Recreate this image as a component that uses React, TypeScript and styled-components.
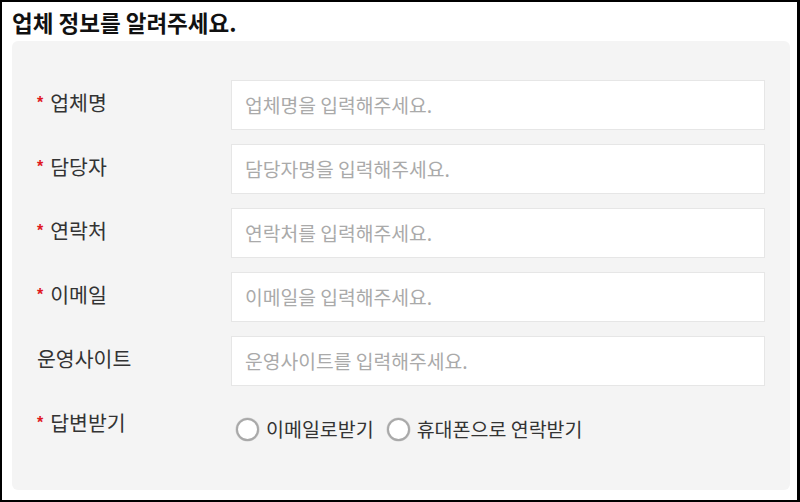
import React from "react";
import styled, { createGlobalStyle } from "styled-components";

const GlobalStyle = createGlobalStyle`
  html, body {
    margin: 0;
    padding: 0;
    background: #ffffff;
  }
  body {
    font-family: "Noto Sans CJK KR", "Noto Sans", sans-serif;
  }
  * { box-sizing: border-box; }
`;

const Frame = styled.div`
  width: 800px;
  height: 502px;
  border: 2px solid #000;
  border-right-width: 3px;
  padding: 6px 7px 0 10px;
  background: #fff;
`;

const Title = styled.h2`
  margin: 0 0 5px;
  font-size: 22.5px;
  line-height: 28px;
  font-weight: 700;
  color: #111;
`;

const Panel = styled.div`
  background: #f4f4f4;
  border-radius: 6px;
  padding: 39px 25px 40px 25px;
  display: grid;
  grid-template-columns: 194px 1fr;
  row-gap: 14px;
`;

const Label = styled.div`
  padding-top: 10px;
  font-size: 20.5px;
  line-height: 24px;
  color: #333;
  white-space: nowrap;
`;

const Star = styled.span`
  display: inline-block;
  font-family: "Liberation Sans", Arial, sans-serif;
  font-weight: 700;
  font-size: 16px;
  color: #e0191f;
  margin-right: 7px;
  vertical-align: 3px;
`;

const TextInput = styled.input`
  display: block;
  width: 100%;
  height: 50px;
  margin: 0;
  padding: 0 13px;
  background: #fff;
  border: 1px solid #e6e6e6;
  border-radius: 0;
  outline: none;
  font-family: "Noto Sans CJK KR", sans-serif;
  font-size: 19.3px;
  color: #333;
  &::placeholder {
    color: #aaaaaa;
  }
`;

const RadioGroup = styled.div`
  display: flex;
  align-items: center;
  height: 50px;
  padding-top: 8px;
  padding-left: 5px;
  gap: 13px;
`;

const RadioOption = styled.label`
  display: flex;
  align-items: center;
  gap: 7px;
  font-size: 19.5px;
  line-height: 24px;
  color: #333;
  cursor: pointer;
  white-space: nowrap;
`;

const RadioCircle = styled.input`
  appearance: none;
  -webkit-appearance: none;
  margin: 0;
  width: 23px;
  height: 23px;
  border-radius: 50%;
  border: 2px solid #a9a9a9;
  background: #fff;
  box-shadow: 0 0 0 0.5px #d0d0d0;
  flex: none;
`;

type Field = { label: string; placeholder: string; required: boolean };

const fields: Field[] = [
  { label: "업체명", placeholder: "업체명을 입력해주세요.", required: true },
  { label: "담당자", placeholder: "담당자명을 입력해주세요.", required: true },
  { label: "연락처", placeholder: "연락처를 입력해주세요.", required: true },
  { label: "이메일", placeholder: "이메일을 입력해주세요.", required: true },
  { label: "운영사이트", placeholder: "운영사이트를 입력해주세요.", required: false },
];

export default function App() {
  return (
    <>
      <GlobalStyle />
      <Frame>
        <Title>업체 정보를 알려주세요.</Title>
        <Panel>
          {fields.map((f) => (
            <React.Fragment key={f.label}>
              <Label>
                {f.required && <Star>*</Star>}
                {f.label}
              </Label>
              <TextInput type="text" placeholder={f.placeholder} />
            </React.Fragment>
          ))}
          <Label>
            <Star>*</Star>답변받기
          </Label>
          <RadioGroup>
            <RadioOption>
              <RadioCircle type="radio" name="reply" />
              이메일로받기
            </RadioOption>
            <RadioOption>
              <RadioCircle type="radio" name="reply" />
              휴대폰으로 연락받기
            </RadioOption>
          </RadioGroup>
        </Panel>
      </Frame>
    </>
  );
}
